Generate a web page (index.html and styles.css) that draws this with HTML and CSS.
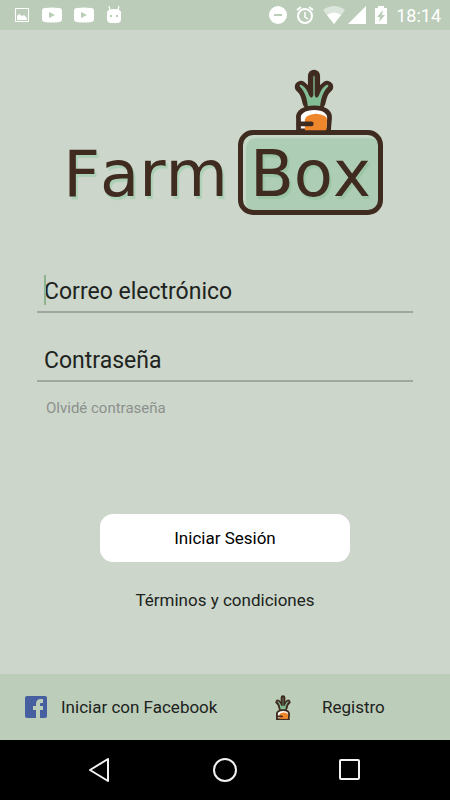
FILE: index.html
```
<!DOCTYPE html>
<html lang="es">
<head>
  <meta charset="UTF-8" />
  <meta name="viewport" content="width=device-width, initial-scale=1.0"/>
  <title>Farm Box</title>
  <link rel="stylesheet" href="styles.css">
</head>
<body>

  <svg width="0" height="0" class="symbols" aria-hidden="true">
    <symbol id="carrot" viewBox="0 0 118 190">
      <g fill="none" stroke="#402b20" stroke-width="36" stroke-linecap="round" stroke-linejoin="round">
        <path d="M59 20V95"/>
        <path d="M20 53C34 62 39 80 43 100"/>
        <path d="M98 53C84 62 79 80 75 100"/>
      </g>
      <path fill="#82bd96" d="M57 24Q59 14 61 24V78Q66 92 74 78C80 60 90 50 98 47C102 46 103 51 99 54C84 70 80 88 77 112H41C38 88 34 70 19 54C15 51 16 46 20 47C28 50 38 60 44 78Q52 92 57 78Z"/>
      <path fill="#fff" stroke="#402b20" stroke-width="14" d="M13 184V147C10 128 30 115 60 115S107 128 105 147L102 184Z"/>
      <path fill="#ee862b" d="M32 186V150Q34 136 65 133Q97 136 98 150L95 186Z"/>
      <path fill="none" stroke="#402b20" stroke-width="14" stroke-linecap="round" d="M14 163H51"/>
      <path fill="none" stroke="#402b20" stroke-width="8" d="M6 186H109"/>
    </symbol>
  </svg>

  <header class="status-bar">
    <div class="notifications">
      <svg width="16" height="16" viewBox="0 0 16 16"><path fill="none" stroke="#fff" d="M1.500 1.500h13v13h-13z"/><path fill="#fff" d="M3 13V9l2-2 3 2 2-1 3 3v2z"/></svg>
      <svg width="20" height="16" viewBox="0 0 20 16"><path fill="#fff" fill-rule="evenodd" d="M3 1Q10 0 17 1Q20 1 20 4V12Q20 15 17 15Q10 16 3 15Q0 15 0 12V4Q0 1 3 1ZM7 5V11L13 8Z"/></svg>
      <svg width="20" height="16" viewBox="0 0 20 16"><path fill="#fff" fill-rule="evenodd" d="M3 1Q10 0 17 1Q20 1 20 4V12Q20 15 17 15Q10 16 3 15Q0 15 0 12V4Q0 1 3 1ZM7 5V11L13 8Z"/></svg>
      <svg width="16" height="18" viewBox="0 0 16 18"><path stroke="#fff" stroke-width="1.200" d="M4 4L3 0M12 4l1-4"/><path fill="#fff" d="M1 6Q2 3 8 3T15 6V13Q15 17 11 17H5Q1 17 1 13Z"/><path fill="#bbccb9" d="M4 9h2v2H4zM10 9h2v2h-2z"/></svg>
    </div>
    <div class="system">
      <svg width="18" height="18" viewBox="0 0 18 18"><circle cx="9" cy="9" r="9" fill="#fff"/><path fill="#bbccb9" d="M5 8h8v2H5z"/></svg>
      <svg width="18" height="18" viewBox="0 0 18 18"><g fill="none" stroke="#fff" stroke-width="2"><circle cx="9" cy="10" r="7"/><path d="M1 4l4-3M17 4l-4-3"/><path stroke-width="1.500" d="M9 6v5l3 2"/></g></svg>
      <svg class="wifi" width="22" height="18" viewBox="0 0 22 18"><path fill="#dce5db" d="M11 18L0 4Q11-4 22 4Z"/><path fill="#fff" d="M11 18L4 9Q11 4 18 9Z"/></svg>
      <svg width="18" height="18" viewBox="0 0 18 18"><path fill="#fff" d="M0 18L18 0V18Z"/></svg>
      <svg class="battery" width="12" height="18" viewBox="0 0 12 18"><path fill="#fff" d="M0 2H3V0H9V2H12V18H0Z"/><path fill="#bbccb9" d="M8 4L2 11H5L4 16L10 9H7Z"/></svg>
      <span class="clock">18:14</span>
    </div>
  </header>

  <main>
    <h1 class="logo">
      <span class="farm">Farm</span>
      <span class="box">Box<svg class="logo-carrot" width="40" height="64"><use href="#carrot"/></svg></span>
    </h1>

    <form class="login" onsubmit="event.preventDefault();">
      <div class="field">
        <span class="cursor"></span>
        <input type="email" placeholder="Correo electrónico" aria-label="Correo electrónico" />
      </div>
      <div class="field">
        <input type="password" placeholder="Contraseña" aria-label="Contraseña" />
      </div>
      <a href="#" class="forgot">Olvidé contraseña</a>
      <button type="submit" class="submit">Iniciar Sesión</button>
      <a href="#" class="terms">Términos y condiciones</a>
    </form>
  </main>

  <footer class="options">
    <a href="#" class="facebook">
      <svg width="22" height="22" viewBox="0 0 22 22"><rect width="22" height="22" rx="2" fill="#455f9f"/><path fill="#bccdb9" d="M11 22V14H8V10H11V8Q11 3 16 3H18V7H16Q15 7 15 8V10H18V14H15V22Z"/></svg>
      Iniciar con Facebook
    </a>
    <a href="#" class="register">
      <svg width="16" height="25"><use href="#carrot"/></svg>
      Registro
    </a>
  </footer>

  <nav class="nav-bar">
    <button type="button" aria-label="Atrás"><svg width="24" height="24" viewBox="0 0 24 24"><path d="M20 1V23L2 12Z"/></svg></button>
    <button type="button" aria-label="Inicio"><svg width="24" height="24" viewBox="0 0 24 24"><circle cx="12" cy="12" r="11"/></svg></button>
    <button type="button" aria-label="Recientes"><svg width="24" height="24" viewBox="0 0 24 24"><rect x="2" y="2" width="19" height="19" rx="1"/></svg></button>
  </nav>

</body>
</html>
```
FILE: styles.css
```
* {
  margin: 0;
  padding: 0;
  box-sizing: border-box;
}

body {
  display: flex;
  flex-direction: column;
  min-height: 100vh;
  background-color: #ccd6cb;
  color: #202320;
  font-family: Roboto, sans-serif;
  font-size: 17px;
}
a {
  color: inherit;
  text-decoration: none;
}
svg {
  flex-shrink: 0;
}
.symbols {
  position: absolute;
}

.status-bar {
  display: flex;
  justify-content: space-between;
  align-items: center;
  height: 30px;
  padding: 0 9px 0 14px;
  background-color: #bbccb9;
}
.notifications,
.system {
  display: flex;
  align-items: center;
}
.notifications {
  gap: 12px;
}
.system {
  gap: 9px;
}
.wifi {
  margin-right: -6px;
}
.clock {
  color: #fff;
  font-size: 18px;
}

main {
  flex: 1;
  padding: 100px 37px 0;
}

.logo {
  display: flex;
  justify-content: center;
  align-items: baseline;
  gap: 10px;
  padding-right: 4px;
  color: #402b20;
  font-family: "DejaVu Sans", sans-serif;
  font-size: 64px;
  font-weight: 400;
  font-kerning: none;
  line-height: 72px;
  text-shadow: 2px 3px 1px #acd0b5;
}
.box {
  position: relative;
  padding: 3px 7px 0;
  border: 5px solid #402b20;
  border-radius: 15px;
  background-color: #adcdb5;
  box-shadow: inset 3px 3px 1px #c6d8c8;
  text-shadow: 2px 3px 1px #9bc5a5;
}
.logo-carrot {
  position: absolute;
  left: 51px;
  bottom: 77px;
}

.login {
  display: flex;
  flex-direction: column;
  margin-top: 56px;
}
.field {
  position: relative;
  margin-bottom: 27px;
}
.field input {
  display: block;
  width: 100%;
  height: 42px;
  padding: 0 7px;
  border: none;
  border-bottom: 2px solid #9fa7a1;
  outline: none;
  background: transparent;
  color: #202320;
  font-family: inherit;
  font-size: 23px;
}
.field input::placeholder {
  color: #202320;
  opacity: 1;
}
.cursor {
  position: absolute;
  left: 7px;
  top: 4px;
  width: 2px;
  height: 30px;
  background-color: #8db48e;
}
.forgot {
  align-self: flex-start;
  margin-top: -11px;
  padding-left: 9px;
  color: #8d918d;
  font-size: 15px;
  line-height: 20px;
}
.submit {
  align-self: center;
  width: 250px;
  height: 48px;
  margin-top: 96px;
  border: none;
  border-radius: 13px;
  background-color: #fff;
  color: #000;
  font-family: inherit;
  font-size: 17px;
  cursor: pointer;
}
.terms {
  align-self: center;
  margin-top: 28px;
  line-height: 20px;
}

.options {
  display: flex;
  height: 66px;
  padding: 0 25px;
  background-color: #bccdb9;
}
.options a {
  display: flex;
  align-items: center;
}
.facebook {
  flex: 5;
  gap: 14px;
}
.register {
  flex: 3;
  gap: 31px;
}

.nav-bar {
  display: flex;
  justify-content: center;
  align-items: center;
  gap: 101px;
  height: 60px;
  background-color: #000;
}
.nav-bar button {
  display: flex;
  border: none;
  background: none;
  cursor: pointer;
}
.nav-bar svg {
  fill: none;
  stroke: #f2f2f2;
  stroke-width: 2;
  stroke-linejoin: round;
}
```
